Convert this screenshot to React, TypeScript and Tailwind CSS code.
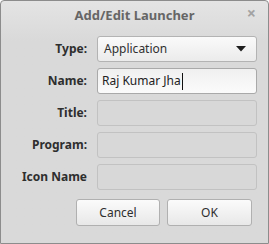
import React from 'react';

const font = { fontFamily: '"Noto Sans", "Open Sans", sans-serif' };

function Field({ label, children }: { label: string; children: React.ReactNode }) {
  return (
    <div className="flex items-center h-[26px]">
      <span className="w-[88px] text-right pr-[10px] text-[12px] font-bold text-[#2e2e2e] shrink-0">{label}</span>
      {children}
    </div>
  );
}

function EmptyEntry() {
  return <div className="w-[160px] h-[26px] rounded-[3px] border border-[#c2c2c2] bg-[#d8d8d8]" />;
}

export default function App() {
  return (
    <div
      className="w-[269px] h-[244px] rounded-t-[4px] border border-[#8c8c8c] bg-gradient-to-b from-[#e4e4e4] to-[#d9d9d9] to-[40px] flex flex-col"
      style={font}
    >
      {/* Title bar */}
      <div className="relative h-[35px] flex items-center justify-center shrink-0">
        <span className="text-[13px] font-bold text-[#666] mt-[-6px]">Add/Edit Launcher</span>
        <span className="absolute right-[12px] top-[4px] text-[16px] leading-none font-bold text-[#a3a3a3]">×</span>
      </div>

      <div className="flex flex-col gap-[6px] pl-[8px]">
        <Field label="Type:">
          <div className="w-[160px] h-[26px] rounded-[3px] border border-[#b3b3b3] bg-gradient-to-b from-[#fafafa] to-[#ebebeb] flex items-center justify-between pl-[6px] pr-[10px]">
            <span className="text-[12px] text-[#303030]">Application</span>
            <svg width="10" height="6" viewBox="0 0 10 6">
              <path d="M0 0 L10 0 L5 5.5 Z" fill="#1e1e1e" />
            </svg>
          </div>
        </Field>
        <Field label="Name:">
          <div className="w-[160px] h-[26px] rounded-[3px] border border-[#a9a9a9] bg-gradient-to-b from-[#f0f0f0] to-[#fbfbfb] flex items-center pl-[4px]">
            <span className="text-[12px] text-[#222]">Raj Kumar Jha</span>
            <span className="w-px h-[17px] bg-[#111] ml-px" />
          </div>
        </Field>
        <Field label="Title:">
          <EmptyEntry />
        </Field>
        <Field label="Program:">
          <EmptyEntry />
        </Field>
        <Field label="Icon Name">
          <EmptyEntry />
        </Field>
      </div>

      <div className="flex justify-end gap-[7px] pr-[16px] mt-[9px]">
        <button className="w-[84px] h-[27px] rounded-[3px] border border-[#b0b0b0] bg-gradient-to-b from-[#fbfbfb] to-[#e8e8e8] text-[12px] text-[#2e2e2e]">
          Cancel
        </button>
        <button className="w-[85px] h-[27px] rounded-[3px] border border-[#b0b0b0] bg-gradient-to-b from-[#fbfbfb] to-[#e8e8e8] text-[12px] text-[#2e2e2e]">
          OK
        </button>
      </div>
    </div>
  );
}
